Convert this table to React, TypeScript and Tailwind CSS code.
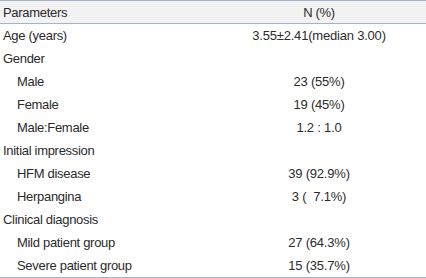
const rows: { label: string; value: string; sub?: boolean }[] = [
  { label: "Age (years)", value: "3.55±2.41(median 3.00)" },
  { label: "Gender", value: "" },
  { label: "Male", value: "23 (55%)", sub: true },
  { label: "Female", value: "19 (45%)", sub: true },
  { label: "Male:Female", value: "1.2 : 1.0", sub: true },
  { label: "Initial impression", value: "" },
  { label: "HFM disease", value: "39 (92.9%)", sub: true },
  { label: "Herpangina", value: "3 (  7.1%)", sub: true },
  { label: "Clinical diagnosis", value: "" },
  { label: "Mild patient group", value: "27 (64.3%)", sub: true },
  { label: "Severe patient group", value: "15 (35.7%)", sub: true },
];

export default function App() {
  return (
    <div className="w-[426px] h-[278px] bg-white text-[#2b2b2b] text-[13px] tracking-[-0.3px] leading-none font-['Liberation_Sans',Arial,sans-serif]">
      <div className="grid grid-cols-[212px_1fr] h-[24px] items-center bg-[#f2f2f2] border-y border-[#a3b3c9]">
        <div className="pl-[3px]">Parameters</div>
        <div className="text-center">N (%)</div>
      </div>
      {rows.map((r) => (
        <div key={r.label} className="grid grid-cols-[212px_1fr] h-[23px] items-center">
          <div className={r.sub ? "pl-[17px]" : "pl-[3px]"}>{r.label}</div>
          <div className="text-center whitespace-pre tracking-[-0.2px]">{r.value}</div>
        </div>
      ))}
      <div className="border-b border-[#a3b3c9]" />
    </div>
  );
}
